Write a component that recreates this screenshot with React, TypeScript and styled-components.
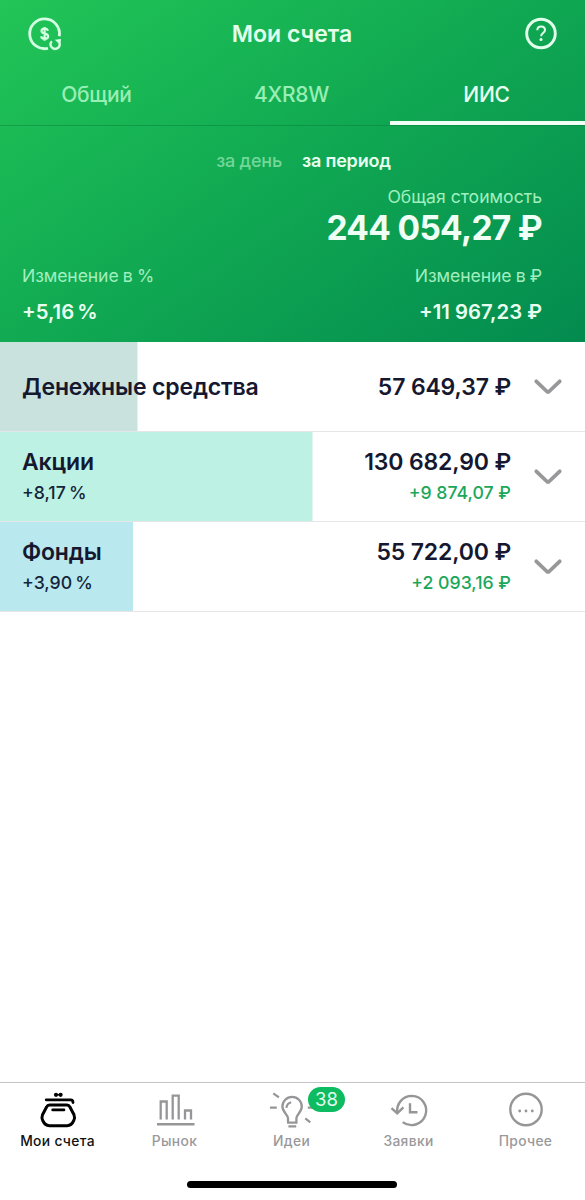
import React from 'react';
import styled, { createGlobalStyle } from 'styled-components';

interface IAsset {
  name: string
  percent?: string
  sum: string
  profit?: string
  share: number
  color: string
}

const assets: IAsset[] = [
  { name: "Денежные средства", sum: "57 649,37 ₽", share: 137.5, color: "#c9e2dd" },
  { name: "Акции", percent: "+8,17 %", sum: "130 682,90 ₽", profit: "+9 874,07 ₽", share: 312.5, color: "#bdf1e3" },
  { name: "Фонды", percent: "+3,90 %", sum: "55 722,00 ₽", profit: "+2 093,16 ₽", share: 133, color: "#b9e8ef" },
]

function App() {
  return (
    <>
      <GlobalStyle />
      <Page>
        <Header>
          <TitleBar>
            <IconSlot><SvgExchange /></IconSlot>
            <Title>Мои счета</Title>
            <IconSlot><SvgHelp /></IconSlot>
          </TitleBar>
          <Tabs>
            <Tab>Общий</Tab>
            <Tab>4XR8W</Tab>
            <Tab $active>ИИС</Tab>
          </Tabs>
          <Period>
            <PeriodItem>за день</PeriodItem>
            <PeriodItem $active>за период</PeriodItem>
          </Period>
          <Total>
            <Label>Общая стоимость</Label>
            <TotalSum>244 054,27 ₽</TotalSum>
          </Total>
          <Changes>
            <Change>
              <Label $tight>Изменение в %</Label>
              <ChangeValue $tight>+5,16 %</ChangeValue>
            </Change>
            <Change $right>
              <Label $tight>Изменение в ₽</Label>
              <ChangeValue>+11 967,23 ₽</ChangeValue>
            </Change>
          </Changes>
        </Header>
        <main>
          {
            assets.map((asset, key) =>
              <Row key={key} $share={asset.share} $color={asset.color}>
                <Cell $double={!!asset.percent}>
                  <Name>{asset.name}</Name>
                  {asset.percent && <Sub>{asset.percent}</Sub>}
                </Cell>
                <Cell $right $double={!!asset.profit}>
                  <Name>{asset.sum}</Name>
                  {asset.profit && <Sub $green>{asset.profit}</Sub>}
                </Cell>
                <SvgChevron />
              </Row>
            )
          }
        </main>
        <Footer>
          <Nav>
            <NavItem $active><SvgPurse /><NavText>Мои счета</NavText></NavItem>
            <NavItem><SvgMarket /><NavText>Рынок</NavText></NavItem>
            <NavItem><SvgIdea /><Badge>38</Badge><NavText>Идеи</NavText></NavItem>
            <NavItem><SvgHistory /><NavText>Заявки</NavText></NavItem>
            <NavItem><SvgMore /><NavText>Прочее</NavText></NavItem>
          </Nav>
          <HomeBar />
        </Footer>
      </Page>
    </>
  )
}

function SvgExchange() {
  return (
    <svg width="38" height="36" viewBox="0 0 38 36" fill="none" stroke="#d5ffe2" strokeWidth="2.8">
      <path d="M22 32.300A14.900 14.900 0 1 1 33.300 20.200" />
      <path d="M21.900 14.800c-.4-1.400-1.500-2.100-3.300-2.100-1.900 0-3.100.9-3.100 2.400 0 3.500 6.700 1.600 6.700 5.200 0 1.600-1.400 2.500-3.500 2.500-2 0-3.300-.8-3.600-2.500M18.600 11v13.800" strokeWidth="2.200" />
      <path d="M25.900 25.200a4.500 4.500 0 1 0 7.500 1.800" strokeWidth="2.300" />
      <path d="M28.800 23.800l6.200-.8-.6 6z" fill="#d5ffe2" stroke="none" />
    </svg>
  )
}

function SvgHelp() {
  return (
    <svg width="36" height="36" viewBox="0 0 36 36" fill="none" stroke="#e2ffec" strokeWidth="2.9">
      <circle cx="18" cy="17.500" r="14.300" />
      <path d="M14.300 14.200c0-2.300 1.500-3.700 3.800-3.700 2.200 0 3.900 1.400 3.900 3.500 0 3-3.900 3.200-3.900 6.300" strokeWidth="2" />
      <circle cx="18" cy="23.500" r="1.500" fill="#e2ffec" stroke="none" />
    </svg>
  )
}

function SvgChevron() {
  return (
    <svg width="30" height="22" viewBox="0 0 30 22" fill="none" stroke="#98989a" strokeWidth="3.800" strokeLinecap="round">
      <path d="M3.300 6.300L15 17.500L26.700 6.300" strokeLinejoin="bevel" />
    </svg>
  )
}

function SvgPurse() {
  return (
    <svg width="44" height="40" viewBox="0 0 44 40" fill="none" stroke="#000" strokeWidth="3" strokeLinecap="round" strokeLinejoin="round">
      <path d="M10.200 11.800h24.500q2.300 0 2.300 2.800" strokeWidth="2.800" />
      <path d="M13.500 17h17.500q2 0 2.800 1.800l4.200 8q1.200 3-.3 5.900-2.100 5-6.600 5H13.400q-4.500 0-6.600-5-1.500-2.900-.3-5.900l4.200-8q.8-1.800 2.800-1.800z" />
      <path d="M16.600 21.900h11.400" strokeWidth="2.600" />
      <path d="M20.300 6.800h4" strokeWidth="1.500" />
      <circle cx="20" cy="6.800" r="2.100" fill="#000" stroke="none" />
      <circle cx="24.600" cy="6.800" r="2.100" fill="#000" stroke="none" />
    </svg>
  )
}

function SvgMarket() {
  return (
    <svg width="44" height="40" viewBox="0 0 44 40" fill="none" stroke="#969698" strokeWidth="2.300">
      <path d="M7.700 31.500V13.500h6v18M19.700 31.500V7.700h6v23.800M32 31.500v-9h6v9" />
      <path d="M4 36.300h37.500" strokeWidth="2.400" />
    </svg>
  )
}

function SvgIdea() {
  return (
    <svg width="44" height="40" viewBox="0 0 44 40" fill="none" stroke="#969698" strokeWidth="2">
      <path d="M18 34v-3.700c0-3.500-5.600-6.200-5.600-11.700a9.700 9.700 0 0 1 19.400 0c0 5.500-5.400 8.200-5.400 11.700V34M17 34.600h10.500M18.400 38.300h7.800" strokeWidth="2.300" />
      <path d="M16.400 19.800c.3-3 2-4.900 4.800-5.600M3.300 5.300l5.600 4.100M0 19.600h6.800M37.800 19.600h5M35.300 30.300l5 4" strokeWidth="2.200" />
    </svg>
  )
}

function SvgHistory() {
  return (
    <svg width="44" height="40" viewBox="0 0 44 40" fill="none" stroke="#969698" strokeWidth="2.400">
      <path d="M10.200 25.200C9.100 15.500 16 7.900 25 7.900a14.600 14.600 0 1 1-9.300 26.200" />
      <path d="M4.500 20.200l5.700 5.200 6.200-6" />
      <path d="M23 15.300v8.900h7.500" />
    </svg>
  )
}

function SvgMore() {
  return (
    <svg width="44" height="40" viewBox="0 0 44 40" fill="none" stroke="#969698" strokeWidth="2.400">
      <circle cx="22" cy="21.500" r="15.700" />
      <g fill="#969698" stroke="none">
        <circle cx="15.700" cy="23" r="1.400" />
        <circle cx="22" cy="23" r="1.400" />
        <circle cx="28.300" cy="23" r="1.400" />
      </g>
    </svg>
  )
}

const GlobalStyle = createGlobalStyle`
  *{
    box-sizing: border-box;
  }
  body{
    margin:0;
    background-color: #fff;
    font-family: Inter, "Liberation Sans", sans-serif;
  }
  h1,h2,p{
    margin:0;
    white-space: nowrap;
  }
  svg{
    flex-shrink: 0;
  }
`
const Page = styled.div`
  display:flex;
  flex-direction: column;
  width:585px;
  height:1200px;
  overflow:hidden;
  main{
    flex:1;
  }
`
const Header = styled.header`
  height:341.5px;
  background: linear-gradient(145deg, #22c557 0%, #10a852 50%, #038b4f 100%);
`
const TitleBar = styled.div`
  display:flex;
  align-items: center;
  justify-content: space-between;
  height:67px;
  padding:0 26px;
`
const IconSlot = styled.div`
  display:flex;
  width:36px;
`
const Title = styled.h1`
  padding:1px 1px 0 0;
  font-size: 23px;
  line-height: 30px;
  font-weight: 600;
  color:#e2ffec;
`
const Tabs = styled.div`
  display:grid;
  grid-template-columns: repeat(3, 1fr);
  height:59px;
  border-bottom: 1px solid rgba(0, 110, 50, 0.35);
`
const Tab = styled.div<{ $active?: boolean }>`
  display:flex;
  justify-content: center;
  height:58px;
  padding:15px 2px 0 0;
  font-size: 21px;
  line-height: 26px;
  letter-spacing: -0.3px;
  font-weight: 500;
  color:${p => p.$active ? "#e8fff0" : "#98eeb4"};
  border-bottom: ${p => p.$active ? "4px solid #f0fff6" : "none"};
`
const Period = styled.div`
  display:flex;
  justify-content: center;
  gap:20px;
  padding:24px 0 0 22px;
`
const PeriodItem = styled.p<{ $active?: boolean }>`
  font-size: 18px;
  line-height: 22px;
  letter-spacing: -0.2px;
  font-weight: ${p => p.$active ? 600 : 500};
  color:${p => p.$active ? "#e8fff0" : "#74d79a"};
`
const Total = styled.div`
  display:flex;
  flex-direction: column;
  align-items: flex-end;
  padding:14px 43px 0 0;
`
const Label = styled.p<{ $tight?: boolean }>`
  font-size: 17.6px;
  line-height: 22px;
  letter-spacing: ${p => p.$tight ? "-0.1px" : "0"};
  word-spacing: ${p => p.$tight ? "-0.6px" : "0"};
  color:#a0efbf;
`
const TotalSum = styled.h2`
  font-size: 33.5px;
  line-height: 40px;
  letter-spacing: -0.7px;
  font-weight: 700;
  color:#f0fff6;
`
const Changes = styled.div`
  display:flex;
  justify-content: space-between;
  padding:17px 43px 0 22px;
`
const Change = styled.div<{ $right?: boolean }>`
  display:flex;
  flex-direction: column;
  align-items: ${p => p.$right ? "flex-end" : "flex-start"};
  gap:12px;
`
const ChangeValue = styled.p<{ $tight?: boolean }>`
  font-size: 20.3px;
  line-height: 26px;
  font-weight: 600;
  word-spacing: ${p => p.$tight ? "-2px" : "0"};
  color:#e8fff0;
`
const Row = styled.div<{ $share: number, $color: string }>`
  display:flex;
  align-items: center;
  height:90px;
  padding:0 22px;
  border-bottom: 1px solid #e6e6e8;
  background: linear-gradient(${p => p.$color}, ${p => p.$color}) 0 0 / ${p => p.$share}px 90px no-repeat border-box;
`
const Cell = styled.div<{ $right?: boolean, $double?: boolean }>`
  display:flex;
  flex-direction: column;
  gap:4px;
  align-items: ${p => p.$right ? "flex-end" : "flex-start"};
  margin-left: ${p => p.$right ? "auto" : "0"};
  margin-right: ${p => p.$right ? "22px" : "0"};
  padding:${p => p.$double ? "0 0 1px" : "1px 0 0"};
`
const Name = styled.h2`
  font-size: 23px;
  line-height: 30px;
  letter-spacing: -0.15px;
  font-weight: 600;
  color:#15182f;
`
const Sub = styled.p<{ $green?: boolean }>`
  font-size: 17.7px;
  line-height: 24px;
  font-weight: 500;
  word-spacing: ${p => p.$green ? "0" : "-1.6px"};
  color:${p => p.$green ? "#1ba75a" : "#14253a"};
`
const Footer = styled.footer`
  height:118px;
  border-top: 1px solid #c4c4c6;
`
const Nav = styled.nav`
  display:grid;
  grid-template-columns: repeat(5, 117px);
  height:98px;
  margin-left: -1px;
`
const NavItem = styled.div<{ $active?: boolean }>`
  position:relative;
  display:flex;
  flex-direction: column;
  align-items: center;
  padding-top: 5px;
  color:${p => p.$active ? "#111" : "#99999b"};
`
const NavText = styled.p`
  margin-top: 4px;
  font-size: 13.8px;
  line-height: 18px;
  letter-spacing: 0.35px;
  font-weight: 500;
`
const Badge = styled.div`
  position:absolute;
  top:4px;
  left:75px;
  width:37px;
  height:25px;
  border-radius: 13px;
  background-color: #0dbb60;
  color:#e2ffec;
  font-size: 18.5px;
  line-height: 25px;
  text-align: center;
`
const HomeBar = styled.div`
  width:210px;
  height:7px;
  margin:0 auto 0 187px;
  border-radius: 4px;
  background-color: #000;
`

export default App
